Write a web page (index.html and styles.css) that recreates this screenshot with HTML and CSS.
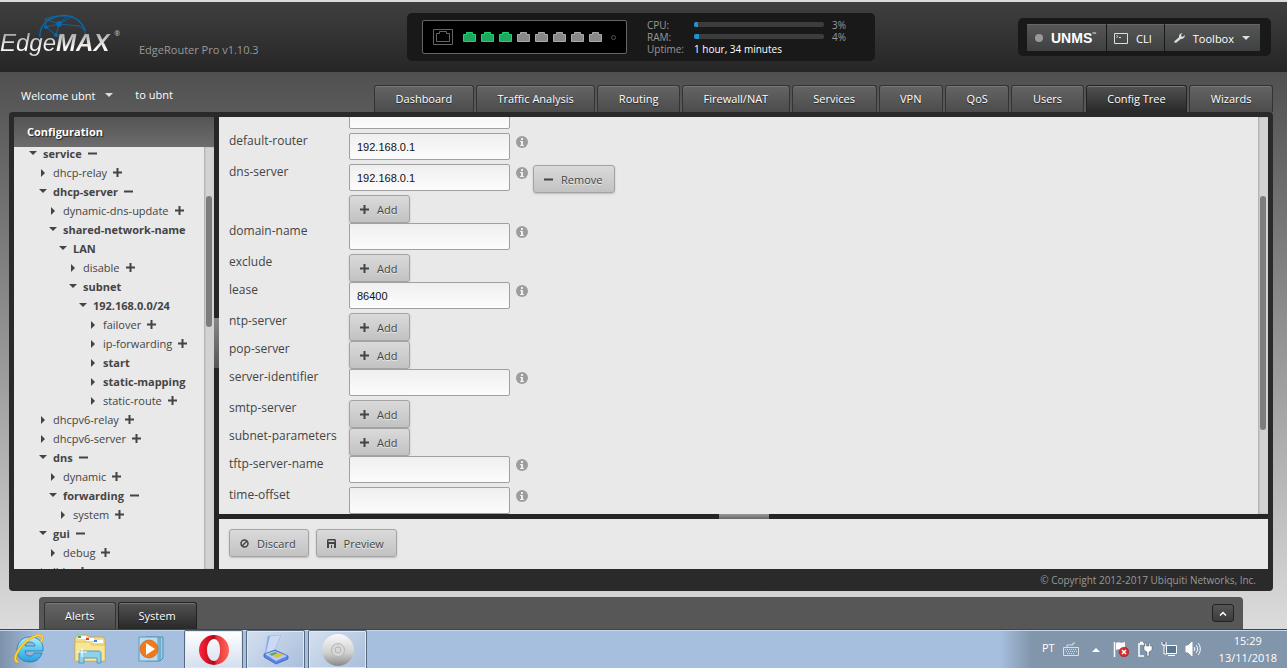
FILE: index.html
```html
<!DOCTYPE html>
<html lang="en">
<head>
  <meta charset="UTF-8">
  <meta name="viewport" content="width=device-width, initial-scale=1.0">
  <title>EdgeOS - Config Tree</title>
  <link rel="stylesheet" href="styles.css">
</head>
<body>
  <!-- Shared icons -->
  <svg class="sprite" aria-hidden="true">
    <symbol id="down" viewBox="0 0 8 4"><path d="M0 0h8L4 4z"/></symbol>
    <symbol id="right" viewBox="0 0 4 8"><path d="M0 0l4 4-4 4z"/></symbol>
    <symbol id="plus" viewBox="0 0 9 9"><path d="M3.500 0h2v3.500H9v2H5.500V9h-2V5.500H0v-2h3.500z"/></symbol>
    <symbol id="minus" viewBox="0 0 9 9"><path d="M0 3.500h9v2H0z"/></symbol>
    <symbol id="port" viewBox="0 0 13 10"><path stroke="currentColor" fill-opacity=".8" d="M.5 9.500v-7h3v-2h6v2h3v7z"/></symbol>
    <symbol id="info" viewBox="0 0 12 12"><circle cx="6" cy="6" r="6"/><path fill="#eee" d="M5 2h2v2H5zM4 5h3v4h1v1H4V9h1V6H4z"/></symbol>
  </svg>

  <!-- Header -->
  <header class="header">
    <div class="brand">
      <div class="logo">
        <svg class="globe" viewBox="0 0 48 26" fill="none" stroke="#0a68ab">
          <path stroke-width="1.500" d="M1 23C0 11 10 2 25 1.500c10 0 18 6 21 15"/>
          <path stroke-width=".9" d="M7 13l13-3 8-8M7 13l10 8 3-11M6 5l14 5 20 2M7 13L6 5l10-3M20 10l14-8M17 21l6 3M46 15v8l-2 2M40 12l6 4"/>
          <g fill="#0a68ab"><circle cx="20" cy="10" r="2.500"/><circle cx="7" cy="13" r="1.500"/><circle cx="17" cy="21" r="1.500"/></g>
        </svg>
        <span class="logo-text">Edge<b>MAX</b></span><span class="reg">®</span>
      </div>
      <span class="model">EdgeRouter Pro v1.10.3</span>
    </div>

    <div class="status">
      <div class="ports">
        <svg class="console" viewBox="0 0 20 16" fill="none" stroke="#666"><path d="M.5.5h19v15H.5z"/><path d="M3.500 12.500v-8h3v-2h7v2h3v8z"/></svg>
        <svg class="port up"><use href="#port"/></svg>
        <svg class="port up"><use href="#port"/></svg>
        <svg class="port up"><use href="#port"/></svg>
        <svg class="port"><use href="#port"/></svg>
        <svg class="port"><use href="#port"/></svg>
        <svg class="port"><use href="#port"/></svg>
        <svg class="port"><use href="#port"/></svg>
        <svg class="port"><use href="#port"/></svg>
        <i class="led"></i>
      </div>
      <dl class="stats">
        <dt>CPU:</dt><dd><span class="bar"><i style="width: 3%"></i></span>3%</dd>
        <dt>RAM:</dt><dd><span class="bar"><i style="width: 4%"></i></span>4%</dd>
        <dt>Uptime:</dt><dd class="uptime">1 hour, 34 minutes</dd>
      </dl>
    </div>

    <div class="tools">
      <button class="tool unms"><i class="dot"></i><b>UNMS</b><sup>™</sup></button>
      <button class="tool">
        <svg width="14" height="11" viewBox="0 0 14 11" fill="none" stroke="#ddd"><path d="M.5.5h13v10H.5zM2.500 2.500l1.500 1-1.500 1M5 4.500h2"/></svg>
        CLI
      </button>
      <button class="tool toolbox">
        <svg width="11" height="10" viewBox="0 0 11 10" fill="#ddd"><path d="M.4 8.200L5 4.200C4.700 2 6 .2 8.500.3L7 2l.6 1.400L9 3.800 10.800 2c.3 2.500-1.500 4.200-4 4L2.200 9.700C1 10.200-.2 9.200.4 8.200z"/></svg>
        Toolbox
        <svg class="caret"><use href="#down"/></svg>
      </button>
    </div>
  </header>

  <!-- Navigation -->
  <div class="navbar">
    <button class="user">Welcome ubnt <svg class="caret"><use href="#down"/></svg></button>
    <span class="host">to ubnt</span>
    <nav class="tabs">
      <a class="tab" href="#dashboard">Dashboard</a>
      <a class="tab" href="#traffic">Traffic Analysis</a>
      <a class="tab" href="#routing">Routing</a>
      <a class="tab" href="#firewall">Firewall/NAT</a>
      <a class="tab" href="#services">Services</a>
      <a class="tab" href="#vpn">VPN</a>
      <a class="tab" href="#qos">QoS</a>
      <a class="tab" href="#users">Users</a>
      <a class="tab active" href="#config">Config Tree</a>
      <a class="tab" href="#wizards">Wizards</a>
    </nav>
  </div>

  <!-- Content -->
  <main class="frame">
    <div class="panes">
      <aside class="sidebar">
        <h2>Configuration</h2>
        <div class="scroller">
          <ul class="tree">
            <li><div class="node open"><svg class="down"><use href="#down"/></svg>service<svg class="sign"><use href="#minus"/></svg></div>
              <ul>
                <li><div class="node"><svg class="right"><use href="#right"/></svg>dhcp-relay<svg class="sign"><use href="#plus"/></svg></div></li>
                <li><div class="node open"><svg class="down"><use href="#down"/></svg>dhcp-server<svg class="sign"><use href="#minus"/></svg></div>
                  <ul>
                    <li><div class="node"><svg class="right"><use href="#right"/></svg>dynamic-dns-update<svg class="sign"><use href="#plus"/></svg></div></li>
                    <li><div class="node open"><svg class="down"><use href="#down"/></svg>shared-network-name</div>
                      <ul>
                        <li><div class="node open"><svg class="down"><use href="#down"/></svg>LAN</div>
                          <ul>
                            <li><div class="node"><svg class="right"><use href="#right"/></svg>disable<svg class="sign"><use href="#plus"/></svg></div></li>
                            <li><div class="node open"><svg class="down"><use href="#down"/></svg>subnet</div>
                              <ul>
                                <li><div class="node open"><svg class="down"><use href="#down"/></svg>192.168.0.0/24</div>
                                  <ul>
                                    <li><div class="node"><svg class="right"><use href="#right"/></svg>failover<svg class="sign"><use href="#plus"/></svg></div></li>
                                    <li><div class="node"><svg class="right"><use href="#right"/></svg>ip-forwarding<svg class="sign"><use href="#plus"/></svg></div></li>
                                    <li><div class="node open"><svg class="right"><use href="#right"/></svg>start</div></li>
                                    <li><div class="node open"><svg class="right"><use href="#right"/></svg>static-mapping</div></li>
                                    <li><div class="node"><svg class="right"><use href="#right"/></svg>static-route<svg class="sign"><use href="#plus"/></svg></div></li>
                                  </ul>
                                </li>
                              </ul>
                            </li>
                          </ul>
                        </li>
                      </ul>
                    </li>
                  </ul>
                </li>
                <li><div class="node"><svg class="right"><use href="#right"/></svg>dhcpv6-relay<svg class="sign"><use href="#plus"/></svg></div></li>
                <li><div class="node"><svg class="right"><use href="#right"/></svg>dhcpv6-server<svg class="sign"><use href="#plus"/></svg></div></li>
                <li><div class="node open"><svg class="down"><use href="#down"/></svg>dns<svg class="sign"><use href="#minus"/></svg></div>
                  <ul>
                    <li><div class="node"><svg class="right"><use href="#right"/></svg>dynamic<svg class="sign"><use href="#plus"/></svg></div></li>
                    <li><div class="node open"><svg class="down"><use href="#down"/></svg>forwarding<svg class="sign"><use href="#minus"/></svg></div>
                      <ul>
                        <li><div class="node"><svg class="right"><use href="#right"/></svg>system<svg class="sign"><use href="#plus"/></svg></div></li>
                      </ul>
                    </li>
                  </ul>
                </li>
                <li><div class="node open"><svg class="down"><use href="#down"/></svg>gui<svg class="sign"><use href="#minus"/></svg></div>
                  <ul>
                    <li><div class="node"><svg class="right"><use href="#right"/></svg>debug<svg class="sign"><use href="#plus"/></svg></div></li>
                  </ul>
                </li>
                <li><div class="node"><svg class="right"><use href="#right"/></svg>lldp<svg class="sign"><use href="#plus"/></svg></div></li>
              </ul>
            </li>
          </ul>
          <div class="track"><div class="thumb thumb-tree"></div></div>
        </div>
      </aside>

      <div class="splitter"><i></i></div>

      <section class="detail">
        <div class="scroller">
          <form class="fields">
            <div class="row"><span></span><input type="text" aria-label="client-prefix-length"></div>
            <div class="row"><label for="router">default-router</label><input type="text" id="router" value="192.168.0.1"><svg class="info"><use href="#info"/></svg></div>
            <div class="row"><label for="dns">dns-server</label><input type="text" id="dns" value="192.168.0.1"><svg class="info"><use href="#info"/></svg>
              <button type="button" class="btn remove"><svg class="glyph"><use href="#minus"/></svg>Remove</button></div>
            <div class="row short"><span></span><button type="button" class="btn"><svg class="glyph"><use href="#plus"/></svg>Add</button></div>
            <div class="row"><label for="domain">domain-name</label><input type="text" id="domain"><svg class="info"><use href="#info"/></svg></div>
            <div class="row short"><label for="exclude">exclude</label><button type="button" class="btn" id="exclude"><svg class="glyph"><use href="#plus"/></svg>Add</button></div>
            <div class="row"><label for="lease">lease</label><input type="text" id="lease" value="86400"><svg class="info"><use href="#info"/></svg></div>
            <div class="row short"><label for="ntp">ntp-server</label><button type="button" class="btn" id="ntp"><svg class="glyph"><use href="#plus"/></svg>Add</button></div>
            <div class="row short"><label for="pop">pop-server</label><button type="button" class="btn" id="pop"><svg class="glyph"><use href="#plus"/></svg>Add</button></div>
            <div class="row"><label for="ident">server-identifier</label><input type="text" id="ident"><svg class="info"><use href="#info"/></svg></div>
            <div class="row short"><label for="smtp">smtp-server</label><button type="button" class="btn" id="smtp"><svg class="glyph"><use href="#plus"/></svg>Add</button></div>
            <div class="row short"><label for="params">subnet-parameters</label><button type="button" class="btn" id="params"><svg class="glyph"><use href="#plus"/></svg>Add</button></div>
            <div class="row"><label for="tftp">tftp-server-name</label><input type="text" id="tftp"><svg class="info"><use href="#info"/></svg></div>
            <div class="row"><label for="offset">time-offset</label><input type="text" id="offset"><svg class="info"><use href="#info"/></svg></div>
          </form>
          <div class="track"><div class="thumb thumb-detail"></div></div>
        </div>
        <div class="splitter horizontal"><i></i></div>
        <div class="actions">
          <button class="btn"><svg class="glyph" viewBox="0 0 9 9" fill="none" stroke="#444" stroke-width="1.500"><circle cx="4.500" cy="4.500" r="3.500"/><path d="M2 7l5-5"/></svg>Discard</button>
          <button class="btn"><svg class="glyph" viewBox="0 0 9 9"><path fill-rule="evenodd" d="M0 1l1-1h7l1 1v8H0zM1.500 1.500V3h6V1.500zM2 5v4h5V5z"/><path d="M4 6h1v3H4z"/></svg>Preview</button>
        </div>
      </section>
    </div>
    <footer>© Copyright 2012-2017 Ubiquiti Networks, Inc.</footer>
  </main>

  <!-- Alerts dock -->
  <div class="dock">
    <a class="tab" href="#alerts">Alerts</a>
    <a class="tab active" href="#system">System</a>
    <button class="expand" aria-label="Expand"><svg width="8" height="5" viewBox="0 0 8 5" fill="none" stroke="#fff" stroke-width="1.500"><path d="M1 4.500l3-3 3 3"/></svg></button>
  </div>

  <!-- Taskbar -->
  <div class="taskbar">
    <button class="task" aria-label="Internet Explorer">
      <svg width="32" height="32" viewBox="0 0 32 32">
        <defs><linearGradient id="ie" x2="0" y2="1"><stop stop-color="#b5ecfb"/><stop offset=".5" stop-color="#5cc8f0"/><stop offset="1" stop-color="#2a9ddc"/></linearGradient></defs>
        <path fill="url(#ie)" stroke="#1a6fae" stroke-width=".7" fill-rule="evenodd" d="M17 4C8 4 4 11 4 17c0 8 6 12 13 12 6 0 10-3 12-9h-8c-1 2-2 3-4 3-3 0-5-2-5-5h18C31 9 25 4 17 4zm-5 9c0-3 2-4 5-4s5 2 5 4z"/>
        <path fill="none" stroke="#d29a14" stroke-width="2.500" d="M5 29C-3 27 8 10 20 4c8-4 12-1 8 5"/>
        <path fill="none" stroke="#fbd633" stroke-width="1.700" d="M5 29C-3 27 8 10 20 4c8-4 12-1 8 5"/>
      </svg>
    </button>
    <button class="task" aria-label="Explorer">
      <svg width="32" height="30" viewBox="0 0 32 30">
        <path fill="#f3dc82" stroke="#c9a545" stroke-width=".8" d="M1 27V4l2-3h10l2 2h14l2 3v21z"/>
        <path fill="#fff" d="M4 2h8v3H4zM12 4h8v3h-8zM20 6h9v3h-9z"/>
        <path fill="#2bb24c" d="M4 2h3v2H4z"/><path fill="#d9422f" d="M12 4h3v2h-3z"/><path fill="#2b8fe0" d="M20 6h3v2h-3z"/>
        <path fill="#f8e596" stroke="#d0ad4e" stroke-width=".6" d="M1 27V8h14l3 3h13v16z"/>
        <path fill="#8fd0ea" stroke="#3d91bb" stroke-width=".8" d="M5 29V19c0-1 1-2 2-2h18c1 0 2 1 2 2v10h-4v-5H10v5z"/>
        <path stroke="#fff" d="M8 14v9M3 18h10"/>
      </svg>
    </button>
    <button class="task" aria-label="Media Player">
      <svg width="28" height="26" viewBox="0 0 28 26">
        <path fill="#9cc9e4" stroke="#4e91b7" d="M8 1h17v21l-3 3H8zM22 1v24M19 1v24"/>
        <path fill="#b9dcef" stroke="#5a9cc0" d="M1 1h19v24H1z"/>
        <circle cx="11" cy="13" r="9" fill="#f07a1b" stroke="#c75a0b" stroke-width=".6"/><path fill="#fff" d="M8 7l9 6-9 6z"/>
      </svg>
    </button>
    <button class="task running current" aria-label="Opera">
      <svg width="30" height="30" viewBox="0 0 30 30">
        <defs><linearGradient id="opera"><stop stop-color="#ff2438"/><stop offset=".5" stop-color="#b3061a"/><stop offset=".6" stop-color="#e6343c"/><stop offset="1" stop-color="#ff6458"/></linearGradient></defs>
        <path fill="url(#opera)" fill-rule="evenodd" d="M15 0a15 15 0 1 0 0 30 15 15 0 0 0 0-30zm0 4c4 0 6 5 6 11s-2 11-6 11-7-5-7-11S11 4 15 4z"/>
      </svg>
    </button>
    <button class="task running" aria-label="Scanner">
      <svg width="28" height="30" viewBox="0 0 28 30">
        <path fill="#cbd9f5" stroke="#a3b8e2" stroke-width=".7" d="M6 1l13-1-7 17-9 2z"/><path fill="#8ba9e8" d="M6 1h2L4 18l-1 1z"/>
        <path fill="#5b86e8" stroke="#2f57bd" stroke-width=".7" d="M2 19l11-4 13 6v3l-12 5L2 22z"/>
        <path fill="#b9cdf8" d="M3 19l10-3 12 5-11 5z"/><path fill="#6ba558" d="M7 19l6-2 3 1-6 3z"/><path fill="#d9c33b" d="M11 21l6-3 5 2-7 3z"/>
      </svg>
    </button>
    <button class="task running" aria-label="Disc">
      <svg width="32" height="32" viewBox="0 0 32 32">
        <defs><linearGradient id="disc" x2="0" y2="1"><stop stop-color="#fafafa"/><stop offset=".6" stop-color="#cfcfcf"/><stop offset="1" stop-color="#888"/></linearGradient></defs>
        <circle cx="16" cy="16" r="16" fill="url(#disc)"/><g fill="none" stroke="#b5b5b5"><circle cx="16" cy="16" r="6.500" fill="#d8d8d8"/><circle cx="16" cy="16" r="3"/></g>
      </svg>
    </button>

    <div class="tray">
      <span class="lang">PT</span>
      <svg width="16" height="14" viewBox="0 0 16 14" fill="none" stroke="#ddd"><path d="M.5 5.500h15v8H.5zM4 5V3h6V1h2"/><path stroke-dasharray="1 1" d="M2 7.500h12M3 9.500h11M4 11.500h8"/></svg>
      <svg class="chevron" width="8" height="5" viewBox="0 0 8 5" fill="#fff"><path d="M0 5l4-4 4 4z"/></svg>
      <svg width="16" height="16" viewBox="0 0 16 16"><path stroke="#fff" stroke-width="1.500" d="M1.500 1v15"/><path fill="#fff" d="M3 2c3-2 4 1 9-1v7c-4 2-6-1-9 1z"/><circle cx="11" cy="11" r="4.800" fill="#d62f2b" stroke="#911" stroke-width=".5"/><path stroke="#fff" stroke-width="1.500" d="M9 9l4 4M13 9l-4 4"/></svg>
      <svg width="16" height="16" viewBox="0 0 16 16" fill="#fff"><path fill="none" stroke="#fff" stroke-width="1.500" d="M7 15H2V3h5M3 1.500h3"/><path stroke="#445" stroke-width=".4" d="M8 2h1.500v3H12V2h1.500v3H15v4l-3 2v4h-2v-4L7 9V5h1z"/></svg>
      <svg width="16" height="16" viewBox="0 0 16 16" fill="#5d7690" stroke="#fff"><path d="M5.500 4.500h10v8h-10zM7 14.500h7M1 1v3h4V1M3 4v9h3"/></svg>
      <svg width="16" height="16" viewBox="0 0 16 16" fill="none" stroke="#fff"><path fill="#fff" d="M1 5h2l4-4v14l-4-4H1z"/><path d="M9 6c1 1 1 3 0 4M11 4c2 2 2 6 0 8M13 2c3 3 3 9 0 12"/></svg>
      <div class="clock">15:29<br>13/11/2018</div>
    </div>
  </div>
</body>
</html>
```

FILE: styles.css
```css
* {
  box-sizing: border-box;
}
body {
  margin: 0;
  height: 100vh;
  display: flex;
  flex-direction: column;
  overflow: hidden;
  font-family: 'Open Sans', sans-serif;
  font-size: 11px;
  color: #444;
  background: linear-gradient(to bottom, #505050 72px, #dcdcdc 629px);
}
button {
  font-family: inherit;
  font-size: 11px;
  margin: 0;
  padding: 0;
  border: none;
  background: none;
  color: inherit;
  cursor: pointer;
}
ul {
  list-style: none;
  margin: 0;
  padding: 0;
}
svg {
  flex: none;
}
.sprite {
  display: none;
}
.caret {
  width: 8px;
  height: 4px;
  fill: #ddd;
}

/* header */
.header {
  height: 72px;
  flex: none;
  display: grid;
  grid-template-columns: 1fr 468px 1fr;
  align-items: center;
  padding-right: 5px;
  border-top: 2px solid #d8dcde;
  background: linear-gradient(to bottom, #3f3f3f, #262626);
}
.brand {
  display: flex;
  align-items: flex-end;
  height: 48px;
}
.logo {
  position: relative;
  width: 120px;
  height: 44px;
  margin-right: 19px;
  white-space: nowrap;
}
.globe {
  position: absolute;
  left: 39px;
  top: -3px;
  width: 48px;
  height: 26px;
}
.logo-text {
  position: relative;
  display: block;
  font: italic 24px/52px 'Liberation Sans', sans-serif;
  color: transparent;
  background: linear-gradient(to bottom, #a8a8a8 16px, #fff 32px, #ccc 40px);
  -webkit-background-clip: text;
  background-clip: text;
}
.reg {
  position: absolute;
  right: 0;
  top: 12px;
  font-size: 7px;
  color: #ccc;
}
.model {
  color: #999;
  line-height: 22px;
}
.status {
  display: flex;
  align-items: center;
  height: 48px;
  padding-left: 15px;
  border-radius: 5px;
  background: #191919;
}
.ports {
  display: flex;
  align-items: center;
  gap: 5px;
  width: 205px;
  height: 34px;
  padding: 0 10px;
  border: 1px solid #666;
  border-radius: 2px;
  background: #000;
}
.console {
  width: 20px;
  height: 16px;
  margin-right: 5px;
}
.port {
  width: 13px;
  height: 10px;
  color: #aaa;
  fill: #aaa;
}
.port.up {
  color: #22d376;
  fill: #22d376;
}
.led {
  width: 5px;
  height: 5px;
  margin-left: 4px;
  border: 1px solid #555;
  border-radius: 50%;
}
.stats {
  display: grid;
  grid-template-columns: 47px 1fr;
  margin: 0 0 1px 20px;
  font-size: 10px;
  line-height: 12px;
  color: #999;
}
.stats dd {
  display: flex;
  align-items: center;
  gap: 8px;
  margin: 0;
}
.stats .uptime {
  color: #fff;
}
.bar {
  width: 130px;
  height: 5px;
  border-radius: 2px;
  background: #3c3c3c;
  overflow: hidden;
}
.bar i {
  display: block;
  height: 5px;
  background: #1b95d4;
}
.tools {
  justify-self: end;
  display: flex;
  gap: 1px;
  margin-right: 11px;
  padding: 6px 11px 5px 9px;
  border-radius: 5px;
  background: #191919;
}
.tool {
  display: flex;
  align-items: center;
  gap: 8px;
  height: 27px;
  padding: 0 12px 0 7px;
  color: #fff;
  border-top: 1px solid #666;
  background: linear-gradient(to bottom, #565656, #3e4041);
}
.tool.unms {
  gap: 0;
  padding: 0 10px 0 8px;
}
.tool b {
  font: bold 14px 'Liberation Sans', sans-serif;
}
.tool sup {
  font-size: 5px;
  margin-top: -8px;
}
.dot {
  width: 8px;
  height: 8px;
  margin-right: 8px;
  border-radius: 50%;
  background: #999;
}
.tool.toolbox {
  padding: 0 10px 0 9px;
}

/* navigation */
.navbar {
  display: flex;
  align-items: flex-end;
  flex: none;
  height: 40px;
  padding: 0 14px 0 21px;
  color: #fff;
}
.user {
  display: flex;
  align-items: center;
  gap: 10px;
  height: 34px;
}
.host {
  margin-left: 22px;
  line-height: 34px;
}
.tabs {
  display: flex;
  gap: 2px;
  min-width: 899px;
  margin-left: auto;
}
.tabs .tab {
  flex: 1 1 auto;
}
.tab {
  height: 27px;
  padding: 0 20px;
  line-height: 26px;
  text-align: center;
  color: #fff;
  text-decoration: none;
  text-shadow: 0 1px 1px #222;
  white-space: nowrap;
  border: 1px solid #333;
  border-bottom: none;
  border-radius: 3px 3px 0 0;
  background: linear-gradient(to bottom, #646464, #4c4c4c);
  box-shadow: inset 0 1px #777;
}
.tab.active {
  background: linear-gradient(to bottom, #525252, #292929);
  border-color: #222;
}

/* main frame */
.frame {
  flex: 1;
  min-height: 0;
  display: flex;
  flex-direction: column;
  margin: 0 14px 6px 9px;
  padding: 5px 5px 0;
  border-radius: 4px;
  background: #2a2a2a;
}
.panes {
  flex: 1;
  min-height: 0;
  display: flex;
}
.frame footer {
  padding-right: 12px;
  line-height: 22px;
  text-align: right;
  color: #999;
  font-size: 10px;
}
.sidebar {
  width: 200px;
  display: flex;
  flex-direction: column;
  background: #e9e9e9;
}
.sidebar h2 {
  margin: 0;
  padding-left: 13px;
  font-size: 11px;
  line-height: 30px;
  color: #fff;
  text-shadow: 1px 1px 1px #222;
  background: linear-gradient(to bottom, #555, #6c6c6c);
}
.scroller {
  flex: 1;
  min-height: 0;
  display: flex;
  overflow: hidden;
}
.tree {
  flex: 1;
  margin-top: -3px;
  padding-left: 12px;
}
.tree ul {
  padding-left: 10px;
}
.node {
  display: flex;
  align-items: center;
  height: 19px;
  white-space: nowrap;
  fill: #444;
}
.node.open {
  font-weight: bold;
}
.node .down {
  width: 8px;
  height: 4px;
  margin: 0 6px 2px 3px;
}
.node .right {
  width: 4px;
  height: 8px;
  margin: 0 8px 0 5px;
}
.sign {
  width: 9px;
  height: 9px;
  margin-left: 6px;
}
.track {
  position: relative;
  width: 10px;
  background: #d3d3d3;
  box-shadow: inset 1px 0 2px #aaa;
}
.thumb {
  position: absolute;
  left: 2px;
  width: 6px;
  border-radius: 3px;
  background: #7d7d7d;
}
.thumb-tree {
  top: 49px;
  height: 31%;
}
.thumb-detail {
  top: 79px;
  height: 59%;
}
.splitter {
  flex: none;
  width: 5px;
  display: flex;
  align-items: center;
  justify-content: center;
  background: #252525;
}
.splitter i {
  width: 5px;
  height: 50px;
  background: linear-gradient(to bottom, #888, #555);
}
.splitter.horizontal {
  width: auto;
  height: 5px;
}
.splitter.horizontal i {
  width: 50px;
  height: 5px;
  background: linear-gradient(to bottom, #999, #666);
}

/* detail form */
.detail {
  flex: 1;
  display: flex;
  flex-direction: column;
  background: #e9e9e9;
}
.fields {
  flex: 1;
  margin-top: -15px;
  padding-left: 10px;
}
.row {
  display: grid;
  grid-template-columns: 120px 161px 12px auto;
  justify-content: start;
  align-items: start;
  height: 31px;
}
.row.short {
  height: 28px;
}
.row label {
  font-size: 12px;
  line-height: 16px;
}
.row input {
  width: 161px;
  height: 27px;
  padding: 1px 7px 0;
  border: 1px solid #a0a0a0;
  border-radius: 2px;
  font: 11px 'Liberation Sans', sans-serif;
  color: #111;
  background: linear-gradient(to bottom, #efefef, #fcfcfc);
}
.info {
  width: 12px;
  height: 12px;
  margin: 3px 0 0 6px;
  fill: #9d9d9d;
}
.btn {
  display: flex;
  align-items: center;
  justify-self: start;
  gap: 8px;
  height: 28px;
  padding: 0 12px 0 10px;
  color: #444;
  fill: #444;
  text-shadow: 0 1px #eee;
  border: 1px solid #a3a3a3;
  border-radius: 3px;
  background: linear-gradient(to bottom, #dadada, #c2c2c2);
  box-shadow: 0 1px 2px #bbb;
}
.btn.remove {
  margin: 1px 0 0 11px;
}
.glyph {
  width: 9px;
  height: 9px;
}
.actions {
  display: flex;
  gap: 7px;
  height: 50px;
  padding: 10px;
}

/* alerts dock */
.dock {
  flex: none;
  display: flex;
  align-items: flex-end;
  gap: 2px;
  height: 32px;
  margin: 0 44px 0 39px;
  padding: 0 9px 0 5px;
  border-radius: 4px 4px 0 0;
  background: #575757;
}
.expand {
  display: flex;
  align-items: center;
  justify-content: center;
  width: 22px;
  height: 18px;
  margin: 0 0 7px auto;
  border: 1px solid #222;
  border-radius: 3px;
  background: linear-gradient(to bottom, #555, #3c3c3c);
}

/* taskbar */
.taskbar {
  flex: none;
  display: flex;
  gap: 3px;
  height: 39px;
  border-top: 1px solid #3a4552;
  box-shadow: inset 0 1px #c5d9ee;
  background: linear-gradient(to right, #7d91aa, #a6bfde 40px, #a6bfde calc(100% - 287px), #8195ab calc(100% - 255px));
}
.task {
  display: flex;
  align-items: center;
  justify-content: center;
  width: 59px;
  height: 38px;
}
.task:first-child {
  width: 57px;
}
.task.running {
  border: 1px solid #56697f;
  border-bottom: none;
  border-radius: 2px 2px 0 0;
  background: linear-gradient(135deg, #d4e0ef, #a9bedb);
  box-shadow: inset 0 0 0 1px #dfe9f5;
}
.task.current {
  background: linear-gradient(to bottom, #fff, #d3dfee);
}
.tray {
  display: flex;
  align-items: center;
  gap: 8px;
  margin-left: auto;
  padding-right: 10px;
  color: #fff;
}
.lang {
  padding-bottom: 4px;
}
.chevron {
  margin: 0 5px;
}
.clock {
  margin-left: 10px;
  text-align: center;
  line-height: 17px;
}
```
